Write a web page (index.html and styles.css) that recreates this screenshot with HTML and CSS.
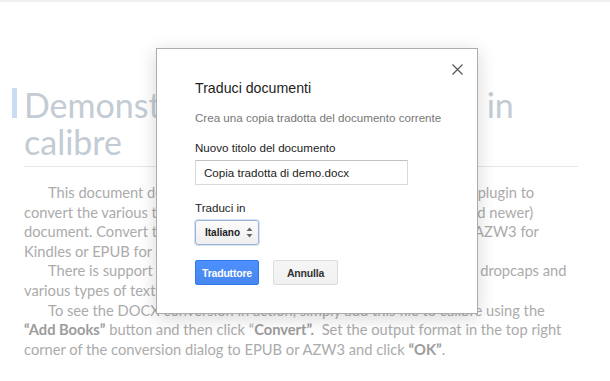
FILE: index.html
```html
<!DOCTYPE html>
<html lang="it">
<head>
    <meta charset="UTF-8">
    <meta name="viewport" content="width=device-width, initial-scale=1.0">
    <title>Traduci documenti</title>
    <link rel="stylesheet" href="styles.css">
</head>
<body>
    <div class="doc">
        <h1 class="doc__title">Demonstrating DOCX support in<br>calibre</h1>
        <p class="doc__para">
            <span class="doc__indent"></span>This document demonstrates the ability of the calibre DOCX Input plugin to<br>
            convert the various typographic features in a Microsoft Word (2007 and newer)<br>
            document. Convert this document to a modern ebook format, such as AZW3 for<br>
            Kindles or EPUB for other ebook readers, to see it in action.
        </p>
        <p class="doc__para">
            <span class="doc__indent"></span>There is support for images, tables, lists, footnotes, endnotes, links, dropcaps and<br>
            various types of text and paragraph level formatting.
        </p>
        <p class="doc__para">
            <span class="doc__indent"></span>To see the DOCX conversion in action, simply add this file to calibre using the<br>
            <b>“Add Books”</b> button and then click “<b>Convert”.</b>&nbsp; Set the output format in the top right<br>
            corner of the conversion dialog to EPUB or AZW3 and click <b>“OK”</b>.
        </p>
    </div>

    <div class="modal">
        <button class="modal__close" aria-label="Chiudi">
            <svg width="11" height="11" viewBox="0 0 11 11">
                <path d="M0.5 0.5 L10.5 10.5 M10.5 0.5 L0.5 10.5" stroke="#555" stroke-width="1.2" fill="none"/>
            </svg>
        </button>
        <h2 class="modal__title">Traduci documenti</h2>
        <p class="modal__desc">Crea una copia tradotta del documento corrente</p>

        <label class="modal__label" for="doc-name">Nuovo titolo del documento</label>
        <input class="modal__input" id="doc-name" type="text" value="Copia tradotta di demo.docx">

        <label class="modal__label modal__label--lang" for="lang">Traduci in</label>
        <div class="select" id="lang">
            <span>Italiano</span>
            <svg width="7" height="11" viewBox="0 0 7 11">
                <path d="M3.5 0.5 L6.5 4 L0.5 4 Z M3.5 10.5 L6.5 7 L0.5 7 Z" fill="#666"/>
            </svg>
        </div>

        <div class="modal__actions">
            <button class="btn btn--primary">Traduttore</button>
            <button class="btn">Annulla</button>
        </div>
    </div>
</body>
</html>
```

FILE: styles.css
```css
* {
    margin: 0;
    padding: 0;
    box-sizing: border-box;
}

body {
    height: 100vh;
    background-color: #fff;
    border-top: 2px solid #f0f0f0;
    overflow: hidden;
    position: relative;
}

.doc {
    padding: 84px 32px 0 24px;
    font-family: "Lato", "Open Sans", sans-serif;
}

.doc__title {
    position: relative;
    font-weight: 400;
    font-size: 34px;
    line-height: 37px;
    color: #c3cbd4;
    padding-bottom: 6px;
    border-bottom: 1px solid #e3e8ec;
    margin-bottom: 16px;
}

.doc__title::before {
    content: '';
    position: absolute;
    left: -12px;
    top: 2px;
    width: 5px;
    height: 30px;
    background-color: #c9dcf1;
}

.doc__para {
    font-size: 14.7px;
    line-height: 19.6px;
    color: #ababab;
    white-space: nowrap;
}

.doc__para b {
    color: #9c9c9c;
}

.doc__indent {
    display: inline-block;
    width: 24px;
}

.modal {
    position: absolute;
    left: 156px;
    top: 46px;
    width: 322px;
    height: 266px;
    background-color: #fff;
    border: 1px solid #acacac;
    box-shadow: 0 4px 18px rgba(0, 0, 0, 0.16);
    padding: 29px 38px 0 38px;
    font-family: "Liberation Sans", Arial, sans-serif;
    display: flex;
    flex-direction: column;
    align-items: flex-start;
}

.modal__close {
    position: absolute;
    top: 15px;
    right: 14px;
    width: 11px;
    height: 11px;
    border: none;
    background: none;
    display: flex;
}

.modal__title {
    font-weight: 400;
    font-size: 14.2px;
    line-height: 20px;
    color: #222;
}

.modal__desc {
    margin-top: 12px;
    font-size: 11.6px;
    line-height: 16px;
    color: #777;
    white-space: nowrap;
}

.modal__label {
    margin-top: 14px;
    font-size: 11.6px;
    line-height: 16px;
    color: #222;
    white-space: nowrap;
}

.modal__label--lang {
    margin-top: 15px;
}

.modal__input {
    margin-top: 4px;
    width: 213px;
    height: 25px;
    border: 1px solid #d9d9d9;
    border-top-color: #c0c0c0;
    padding: 0 8px;
    font-family: inherit;
    font-size: 11.6px;
    color: #222;
    outline: none;
}

.select {
    margin-top: 4px;
    width: 64px;
    height: 25px;
    border: 1px solid #9bb4d5;
    border-radius: 3px;
    background: linear-gradient(#fcfcfc, #eeeeee);
    box-shadow: 0 0 0 1px #d6e2f1;
    display: flex;
    align-items: center;
    justify-content: space-between;
    padding: 0 5px 0 9px;
    font-size: 10px;
    font-weight: bold;
    color: #222;
}

.modal__actions {
    margin-top: 15px;
    display: flex;
    gap: 14px;
}

.btn {
    height: 25px;
    width: 65px;
    padding: 0;
    text-align: center;
    border: 1px solid #dcdcdc;
    border-radius: 2px;
    background: linear-gradient(#f5f5f5, #f1f1f1);
    font-family: inherit;
    font-size: 10.5px;
    font-weight: bold;
    letter-spacing: -0.2px;
    color: #333;
}

.btn--primary {
    width: 64px;
    background: linear-gradient(#4d90fe, #4787ed);
    border-color: #3079ed;
    color: #fff;
}
```
